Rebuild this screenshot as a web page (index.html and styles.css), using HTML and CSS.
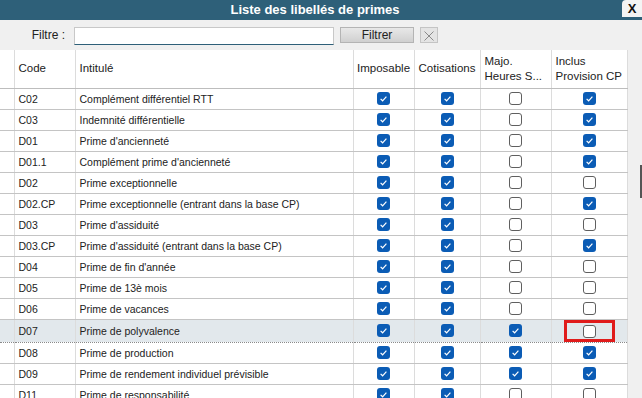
FILE: index.html
```html
<!DOCTYPE html>
<html lang="fr">
<head>
  <meta charset="UTF-8">
  <title>Liste des libellés de primes</title>
  <link rel="stylesheet" href="styles.css">
</head>
<body>
  <div class="window">
    <div class="titlebar">
      <span class="title">Liste des libellés de primes</span>
      <span class="close">X</span>
    </div>
    <div class="filterbar">
      <label class="filter-label">Filtre :</label>
      <input type="text" class="filter-input">
      <button class="btn-filter">Filtrer</button>
      <button class="btn-clear">
        <svg width="12" height="12" viewBox="0 0 12 12"><path d="M1.5 1.5 L10.5 10.5 M10.5 1.5 L1.5 10.5" stroke="#8a8a8a" stroke-width="1"/></svg>
      </button>
    </div>
    <div class="content">
      <table class="grid">
        <colgroup>
          <col style="width:14px"><col style="width:61px"><col style="width:278px">
          <col style="width:61px"><col style="width:66px"><col style="width:71px"><col style="width:76px">
        </colgroup>
        <thead>
          <tr>
            <th></th>
            <th>Code</th>
            <th>Intitulé</th>
            <th class="c">Imposable</th>
            <th class="c">Cotisations</th>
            <th>Majo.<br>Heures S...</th>
            <th>Inclus<br>Provision CP</th>
          </tr>
        </thead>
        <tbody id="rows"></tbody>
      </table>
      <div class="gutter"><div class="thumb"></div></div>
    </div>
  </div>

  <script>
    const primes = [
      ['C02', 'Complément différentiel RTT', 1, 1, 0, 1],
      ['C03', 'Indemnité différentielle', 1, 1, 0, 1],
      ['D01', "Prime d'ancienneté", 1, 1, 0, 1],
      ['D01.1', "Complément prime d'ancienneté", 1, 1, 0, 1],
      ['D02', 'Prime exceptionnelle', 1, 1, 0, 0],
      ['D02.CP', 'Prime exceptionnelle (entrant dans la base CP)', 1, 1, 0, 1],
      ['D03', "Prime d'assiduité", 1, 1, 0, 0],
      ['D03.CP', "Prime d'assiduité (entrant dans la base CP)", 1, 1, 0, 1],
      ['D04', "Prime de fin d'année", 1, 1, 0, 0],
      ['D05', 'Prime de 13è mois', 1, 1, 0, 0],
      ['D06', 'Prime de vacances', 1, 1, 0, 0],
      ['D07', 'Prime de polyvalence', 1, 1, 1, 0],
      ['D08', 'Prime de production', 1, 1, 1, 1],
      ['D09', 'Prime de rendement individuel prévisible', 1, 1, 1, 1],
      ['D11', 'Prime de responsabilité', 1, 1, 0, 0]
    ];

    const check = '<svg width="13" height="13" viewBox="0 0 13 13"><rect x="0" y="0" width="13" height="13" rx="3" fill="#0b5cb5"/><path d="M3.6 6.9 L5.6 8.8 L9.4 4.6" fill="none" stroke="#fff" stroke-width="1.2"/></svg>';

    function box(on, marked) {
      const b = on ? '<span class="cb on">' + check + '</span>' : '<span class="cb"></span>';
      return marked ? '<span class="mark">' + b + '</span>' : b;
    }

    document.getElementById('rows').innerHTML = primes.map(p => {
      const sel = p[0] === 'D07';
      return `<tr${sel ? ' class="selected"' : ''}>
        <td></td><td>${p[0]}</td><td>${p[1]}</td>
        <td class="c">${box(p[2])}</td><td class="c">${box(p[3])}</td>
        <td class="c">${box(p[4])}</td><td class="c">${box(p[5], sel)}</td>
      </tr>`;
    }).join('');
  </script>
</body>
</html>
```

FILE: styles.css
```css
* {
  box-sizing: border-box;
}
html, body {
  margin: 0;
  padding: 0;
}
body {
  width: 642px;
  height: 398px;
  overflow: hidden;
  font-family: "Liberation Sans", Arial, sans-serif;
  color: #222;
  background-color: #f0f0f0;
}
.titlebar {
  height: 20px;
  background-color: #2e6079;
  display: flex;
  align-items: flex-start;
}
.title {
  flex: 1;
  text-align: center;
  color: white;
  font-weight: bold;
  font-size: 13px;
  line-height: 19px;
  padding-left: 8px;
}
.close {
  width: 20px;
  height: 17px;
  background-color: #f4f4f4;
  border-top-left-radius: 4px;
  font-weight: bold;
  font-size: 13px;
  line-height: 17px;
  text-align: center;
  color: #111;
}
.filterbar {
  height: 30px;
  display: flex;
  align-items: center;
  background-color: #f0f0f0;
}
.filter-label {
  width: 66px;
  text-align: right;
  font-size: 12px;
  padding-right: 1px;
  color: #222;
}
.filter-input {
  margin-left: 8px;
  width: 260px;
  height: 18px;
  margin-top: 1px;
  border: 1px solid #c8c8c8;
  border-bottom: 1px solid #2e6079;
  background: white;
  padding: 0 4px;
}
.btn-filter {
  margin-left: 6px;
  width: 74px;
  height: 16px;
  border: 1px solid #b4b4b4;
  background: linear-gradient(#e8e8e8, #d0d0d0);
  font-family: "Liberation Sans", Arial, sans-serif;
  font-size: 12px;
  line-height: 13px;
  padding: 0;
  color: #222;
}
.btn-clear {
  margin-left: 6px;
  width: 18px;
  height: 16px;
  border: 1px solid #c4c4c4;
  background: #e4e4e4;
  padding: 1px 0 0;
  display: flex;
  align-items: center;
  justify-content: center;
}
.content {
  display: flex;
  height: 348px;
}
.grid {
  width: 627px;
  table-layout: fixed;
  border-collapse: collapse;
  background-color: white;
  align-self: flex-start;
}
.grid th {
  height: 38px;
  font-weight: normal;
  font-size: 11.5px;
  text-align: left;
  padding: 0 4px;
  line-height: 15px;
  border-right: 1px solid #dcdcdc;
  border-bottom: 1px solid #bdbdbd;
  color: #222;
  white-space: nowrap;
}
.grid th.c {
  text-align: center;
  padding: 0 2px;
}
.grid td {
  height: 21px;
  font-size: 10.5px;
  padding: 0 4px;
  border-right: 1px solid #dcdcdc;
  border-bottom: 1px solid #c4c4c4;
  white-space: nowrap;
  overflow: hidden;
}
.grid td.c {
  text-align: center;
  padding: 0;
}
.grid tr.selected td {
  background-color: #e2e8ec;
  border-top: 1px dotted #8a8a8a;
  border-bottom: 1px dotted #8a8a8a;
}
.cb {
  display: inline-block;
  width: 13px;
  height: 13px;
  border: 1px solid #5f5f5f;
  border-radius: 3px;
  background-color: white;
  vertical-align: middle;
}
.cb.on {
  border: none;
  background: none;
}
.cb svg {
  display: block;
}
.mark {
  display: inline-block;
  width: 51px;
  height: 22px;
  border: 3px solid #e01b1b;
  text-align: center;
  vertical-align: middle;
  line-height: 14px;
  padding-top: 1px;
}
.gutter {
  flex: 1;
  display: flex;
  flex-direction: column;
  align-items: flex-end;
  padding-top: 115px;
}
.thumb {
  width: 2px;
  height: 33px;
  background-color: #555;
}
```
